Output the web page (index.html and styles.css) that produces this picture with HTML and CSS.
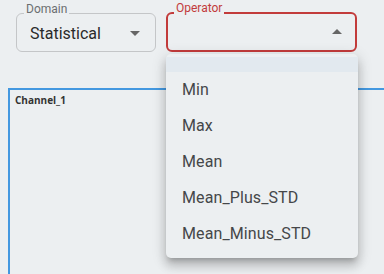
FILE: index.html
```html
<!DOCTYPE html>
<html lang="en">
  <head>
    <meta charset="UTF-8" />
    <title>Operator select</title>
    <link rel="stylesheet" href="styles.css">
  </head>
  <body>
    <div class="toolbar">
      <div class="field domain">
        <span class="field-label">Domain</span>
        <span class="field-value">Statistical</span>
        <span class="arrow down"></span>
      </div>
      <div class="field operator open">
        <span class="field-label">Operator</span>
        <span class="field-value"></span>
        <span class="arrow up"></span>
        <ul class="menu">
          <li class="menu-item empty selected"></li>
          <li class="menu-item">Min</li>
          <li class="menu-item">Max</li>
          <li class="menu-item">Mean</li>
          <li class="menu-item">Mean_Plus_STD</li>
          <li class="menu-item">Mean_Minus_STD</li>
        </ul>
      </div>
    </div>
    <div class="channel">
      <div class="channel-title">Channel_1</div>
    </div>
  </body>
</html>
```

FILE: styles.css
```css
html,
body {
  margin: 0;
  padding: 0;
  height: 100%;
  overflow: hidden;
}
body {
  font-family: Roboto, "Noto Sans", sans-serif;
  background-color: #eceff1;
  color: #2a2a2a;
}
.toolbar {
  display: flex;
  gap: 10px;
  padding: 13px 0 0 16px;
}
.field {
  position: relative;
  box-sizing: border-box;
  height: 39px;
  border: 1px solid #c4c6c8;
  border-radius: 6px;
  display: flex;
  align-items: center;
  padding-left: 13px;
}
.domain {
  width: 140px;
}
.operator {
  width: 191px;
  height: 40px;
  margin-top: -1px;
  border: 2px solid #c23b3b;
}
.field-label {
  position: absolute;
  top: -12px;
  left: 7px;
  padding: 0 2px;
  font-size: 12px;
  line-height: 14px;
  color: #6b6e70;
  background-color: #eceff1;
}
.operator .field-label {
  top: -13px;
  left: 6px;
  color: #c23b3b;
}
.field-value {
  font-size: 16px;
  line-height: 20px;
  padding-top: 2px;
}
.arrow {
  position: absolute;
  right: 15px;
  top: 17px;
  width: 0;
  height: 0;
  border-left: 5px solid transparent;
  border-right: 5px solid transparent;
}
.arrow.down {
  border-top: 5px solid #666;
}
.arrow.up {
  right: 13px;
  top: 15px;
  border-bottom: 5px solid #666;
}
.menu {
  position: absolute;
  top: 40px;
  left: -2px;
  width: 192px;
  margin: 0;
  padding: 3px 0 6px;
  list-style: none;
  background-color: #eceff1;
  border-radius: 5px;
  box-shadow: 0 5px 5px -3px rgba(0, 0, 0, 0.2), 0 8px 10px 1px rgba(0, 0, 0, 0.14), 0 3px 14px 2px rgba(0, 0, 0, 0.12);
  z-index: 2;
}
.menu-item {
  height: 36px;
  line-height: 36px;
  padding-left: 16px;
  font-size: 16px;
  color: #454749;
  letter-spacing: 0.1px;
}
.menu-item.empty {
  height: 15px;
}
.menu-item.selected {
  background-color: #e2e9ef;
}
.channel {
  box-sizing: border-box;
  height: calc(100% - 88px);
  margin: 36px 0 0 8px;
  border: 2px solid #4398e0;
  border-right: 0;
  border-bottom: 0;
  padding: 3px 0 0 5px;
}
.channel-title {
  font-family: "Open Sans", sans-serif;
  font-weight: bold;
  font-size: 10px;
  line-height: 14px;
  color: #333;
}
```
